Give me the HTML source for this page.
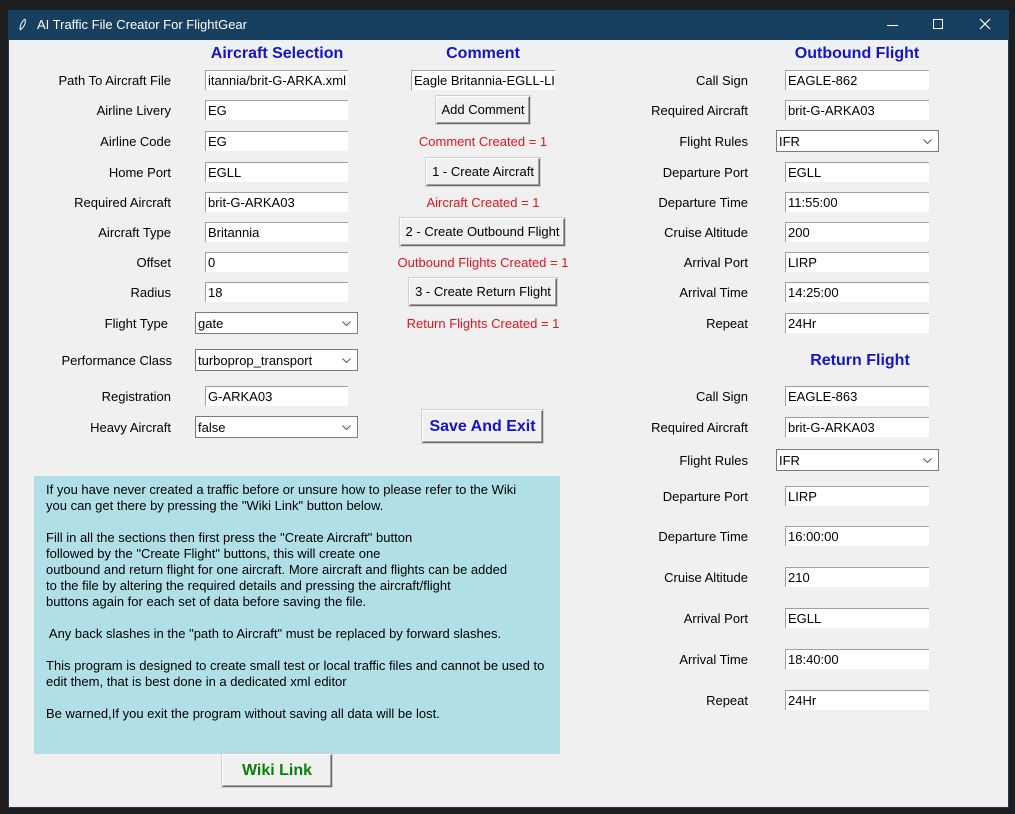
<!DOCTYPE html>
<html><head><meta charset="utf-8"><style>
*{margin:0;padding:0;box-sizing:border-box}
body{width:1015px;height:814px;background:#1e1e1e;position:relative;overflow:hidden;font-family:"Liberation Sans",Arial,sans-serif;font-size:13px;color:#000}
.win{position:absolute;left:8px;top:10px;width:1001px;height:798px;background:#f0f0f0;border:1px solid #1a3d5c}
.tb{position:absolute;left:8px;top:10px;width:1001px;height:30px;background:#173f5f;color:#fff;font-size:13px}
.a{position:absolute;white-space:nowrap}
.l{position:absolute;text-align:right;white-space:nowrap;line-height:16px;margin-top:1px}
.e{position:absolute;background:#fff;height:20px;border-top:1px solid #a0a0a0;border-left:1px solid #a0a0a0;padding-left:2px;padding-top:1px;line-height:18px;overflow:hidden;white-space:nowrap;font-size:13px}
.c{position:absolute;background:#fff;height:22px;border:1px solid #7a7a7a;padding-left:2px;padding-top:1px;line-height:20px;font-size:13px}
.c svg{position:absolute;right:6px;top:8px}
.h{position:absolute;font-weight:bold;font-size:16px;color:#1414c8;text-align:center;transform:translateX(-50%);white-space:nowrap;margin-top:2px}
.r{position:absolute;color:#e0141e;text-align:center;transform:translateX(-50%);white-space:nowrap;line-height:16px;margin-top:1px}
.b{position:absolute;background:#f0f0f0;border-top:1px solid #fff;border-left:1px solid #fff;border-right:1px solid #696969;border-bottom:1px solid #696969;box-shadow:inset -1px -1px 0 #a0a0a0, 0 0 0 1px #d0d0d0;text-align:center;white-space:nowrap;padding-top:1px}
.info{position:absolute;left:34px;top:476px;width:526px;height:278px;background:#b0e0e6;padding:6px 0 0 12px;line-height:16px;font-size:13px;white-space:pre}
</style></head><body>
<div class="win"></div>
<div class="tb">
<svg class="a" style="left:10px;top:8px" width="10" height="14"><path d="M7 1 C4 3 2 7 2 12 M7 1 C8 5 6 9 2 12" stroke="#fff" fill="none" stroke-width="1"/></svg>
<div class="a" style="left:29px;top:7px">AI Traffic File Creator For FlightGear</div>
<div class="a" style="left:879px;top:15px;width:11px;height:1px;background:#fff"></div>
<div class="a" style="left:925px;top:9px;width:10px;height:10px;border:1px solid #fff"></div>
<svg class="a" style="left:971px;top:8px" width="12" height="12"><path d="M1 1L11 11M11 1L1 11" stroke="#fff" stroke-width="1.2"/></svg>
</div>

<div class="h" style="left:277px;top:43px">Aircraft Selection</div>
<div class="h" style="left:483px;top:43px">Comment</div>
<div class="h" style="left:857px;top:43px">Outbound Flight</div>
<div class="h" style="left:860px;top:350px">Return Flight</div>

<div class="l" style="right:844px;top:72px">Path To Aircraft File</div>
<div class="l" style="right:844px;top:102px">Airline Livery</div>
<div class="l" style="right:844px;top:133px">Airline Code</div>
<div class="l" style="right:844px;top:164px">Home Port</div>
<div class="l" style="right:844px;top:194px">Required Aircraft</div>
<div class="l" style="right:844px;top:224px">Aircraft Type</div>
<div class="l" style="right:844px;top:254px">Offset</div>
<div class="l" style="right:844px;top:284px">Radius</div>
<div class="l" style="right:847px;top:315px">Flight Type</div>
<div class="l" style="right:843px;top:352px">Performance Class</div>
<div class="l" style="right:844px;top:388px">Registration</div>
<div class="l" style="right:844px;top:419px">Heavy Aircraft</div>

<div class="e" style="left:205px;top:70px;width:143px">itannia/brit-G-ARKA.xml</div>
<div class="e" style="left:205px;top:100px;width:143px">EG</div>
<div class="e" style="left:205px;top:131px;width:143px">EG</div>
<div class="e" style="left:205px;top:162px;width:143px">EGLL</div>
<div class="e" style="left:205px;top:192px;width:143px">brit-G-ARKA03</div>
<div class="e" style="left:205px;top:222px;width:143px">Britannia</div>
<div class="e" style="left:205px;top:252px;width:143px">0</div>
<div class="e" style="left:205px;top:282px;width:143px">18</div>
<div class="c" style="left:195px;top:312px;width:163px">gate<svg width="9" height="6"><path d="M0.5 0.5L4.5 4.5L8.5 0.5" stroke="#555" fill="none"/></svg></div>
<div class="c" style="left:195px;top:349px;width:163px">turboprop_transport<svg width="9" height="6"><path d="M0.5 0.5L4.5 4.5L8.5 0.5" stroke="#555" fill="none"/></svg></div>
<div class="e" style="left:205px;top:386px;width:143px">G-ARKA03</div>
<div class="c" style="left:195px;top:416px;width:163px">false<svg width="9" height="6"><path d="M0.5 0.5L4.5 4.5L8.5 0.5" stroke="#555" fill="none"/></svg></div>

<div class="e" style="left:411px;top:70px;width:144px">Eagle Britannia-EGLL-LII</div>
<div class="b" style="left:436px;top:96px;width:94px;height:28px;line-height:24px">Add Comment</div>
<div class="r" style="left:483px;top:133px">Comment Created = 1</div>
<div class="b" style="left:426px;top:158px;width:114px;height:28px;line-height:24px">1 - Create Aircraft</div>
<div class="r" style="left:483px;top:194px">Aircraft Created = 1</div>
<div class="b" style="left:400px;top:218px;width:165px;height:28px;line-height:24px">2 - Create Outbound Flight</div>
<div class="r" style="left:483px;top:254px">Outbound Flights Created = 1</div>
<div class="b" style="left:409px;top:278px;width:148px;height:28px;line-height:24px">3 - Create Return Flight</div>
<div class="r" style="left:483px;top:315px">Return Flights Created = 1</div>
<div class="b" style="left:422px;top:410px;width:121px;height:33px;line-height:29px;font-weight:bold;font-size:16px;color:#1414c8">Save And Exit</div>

<div class="l" style="right:267px;top:72px">Call Sign</div>
<div class="l" style="right:267px;top:102px">Required Aircraft</div>
<div class="l" style="right:267px;top:133px">Flight Rules</div>
<div class="l" style="right:267px;top:164px">Departure Port</div>
<div class="l" style="right:267px;top:194px">Departure Time</div>
<div class="l" style="right:267px;top:224px">Cruise Altitude</div>
<div class="l" style="right:267px;top:254px">Arrival Port</div>
<div class="l" style="right:267px;top:284px">Arrival Time</div>
<div class="l" style="right:267px;top:315px">Repeat</div>
<div class="e" style="left:785px;top:70px;width:144px">EAGLE-862</div>
<div class="e" style="left:785px;top:100px;width:144px">brit-G-ARKA03</div>
<div class="c" style="left:776px;top:130px;width:163px">IFR<svg width="9" height="6"><path d="M0.5 0.5L4.5 4.5L8.5 0.5" stroke="#555" fill="none"/></svg></div>
<div class="e" style="left:785px;top:162px;width:144px">EGLL</div>
<div class="e" style="left:785px;top:192px;width:144px">11:55:00</div>
<div class="e" style="left:785px;top:222px;width:144px">200</div>
<div class="e" style="left:785px;top:252px;width:144px">LIRP</div>
<div class="e" style="left:785px;top:282px;width:144px">14:25:00</div>
<div class="e" style="left:785px;top:313px;width:144px">24Hr</div>

<div class="l" style="right:267px;top:388px">Call Sign</div>
<div class="l" style="right:267px;top:419px">Required Aircraft</div>
<div class="l" style="right:267px;top:452px">Flight Rules</div>
<div class="l" style="right:267px;top:488px">Departure Port</div>
<div class="l" style="right:267px;top:528px">Departure Time</div>
<div class="l" style="right:267px;top:569px">Cruise Altitude</div>
<div class="l" style="right:267px;top:610px">Arrival Port</div>
<div class="l" style="right:267px;top:651px">Arrival Time</div>
<div class="l" style="right:267px;top:692px">Repeat</div>
<div class="e" style="left:785px;top:386px;width:144px">EAGLE-863</div>
<div class="e" style="left:785px;top:417px;width:144px">brit-G-ARKA03</div>
<div class="c" style="left:776px;top:449px;width:163px">IFR<svg width="9" height="6"><path d="M0.5 0.5L4.5 4.5L8.5 0.5" stroke="#555" fill="none"/></svg></div>
<div class="e" style="left:785px;top:486px;width:144px">LIRP</div>
<div class="e" style="left:785px;top:526px;width:144px">16:00:00</div>
<div class="e" style="left:785px;top:567px;width:144px">210</div>
<div class="e" style="left:785px;top:608px;width:144px">EGLL</div>
<div class="e" style="left:785px;top:649px;width:144px">18:40:00</div>
<div class="e" style="left:785px;top:690px;width:144px">24Hr</div>

<div class="info">If you have never created a traffic before or unsure how to please refer to the Wiki
you can get there by pressing the "Wiki Link" button below.

Fill in all the sections then first press the "Create Aircraft" button
followed by the "Create Flight" buttons, this will create one
outbound and return flight for one aircraft. More aircraft and flights can be added
to the file by altering the required details and pressing the aircraft/flight
buttons again for each set of data before saving the file.

 Any back slashes in the "path to Aircraft" must be replaced by forward slashes.

This program is designed to create small test or local traffic files and cannot be used to
edit them, that is best done in a dedicated xml editor

Be warned,If you exit the program without saving all data will be lost.</div>
<div class="b" style="left:222px;top:754px;width:110px;height:33px;line-height:29px;font-weight:bold;font-size:16px;color:#0a800a">Wiki Link</div>
</body></html>
